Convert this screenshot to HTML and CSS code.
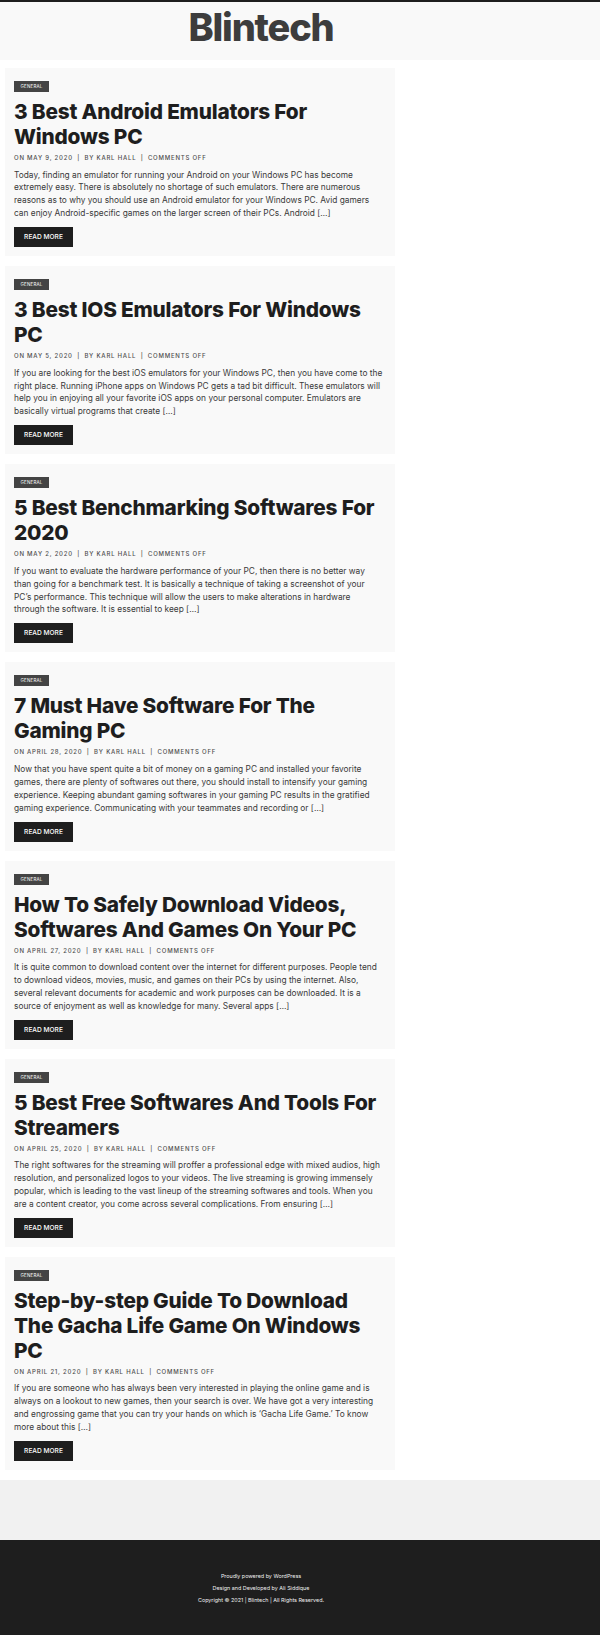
FILE: index.html
```html
<!DOCTYPE html>
<html lang="en">
<head>
<meta charset="utf-8">
<title>Blintech</title>
<link rel="stylesheet" href="styles.css">
</head>
<body>
<header class="site-header">
  <div class="header-inner"><h1 class="site-title">Blintech</h1></div>
</header>
<main class="posts">
  <article class="card">
    <span class="badge">GENERAL</span>
    <h2 class="title">3 Best Android Emulators For Windows PC</h2>
    <p class="meta">ON MAY 9, 2020 <span class="sep">|</span> BY KARL HALL <span class="sep">|</span> COMMENTS OFF</p>
    <p class="excerpt">Today, finding an emulator for running your Android on your Windows PC has become extremely easy. There is absolutely no shortage of such emulators. There are numerous reasons as to why you should use an Android emulator for your Windows PC. Avid gamers<br>can enjoy Android-specific games on the larger screen of their PCs. Android […]</p>
    <a class="btn" href="#">READ MORE</a>
  </article>
  <article class="card">
    <span class="badge">GENERAL</span>
    <h2 class="title">3 Best IOS Emulators For Windows PC</h2>
    <p class="meta">ON MAY 5, 2020 <span class="sep">|</span> BY KARL HALL <span class="sep">|</span> COMMENTS OFF</p>
    <p class="excerpt">If you are looking for the best iOS emulators for your Windows PC, then you have come to the right place. Running iPhone apps on Windows PC gets a tad bit difficult. These emulators will help you in enjoying all your favorite iOS apps on your personal computer. Emulators are basically virtual programs that create […]</p>
    <a class="btn" href="#">READ MORE</a>
  </article>
  <article class="card">
    <span class="badge">GENERAL</span>
    <h2 class="title">5 Best Benchmarking Softwares For 2020</h2>
    <p class="meta">ON MAY 2, 2020 <span class="sep">|</span> BY KARL HALL <span class="sep">|</span> COMMENTS OFF</p>
    <p class="excerpt">If you want to evaluate the hardware performance of your PC, then there is no better way<br>than going for a benchmark test. It is basically a technique of taking a screenshot of your<br>PC’s performance. This technique will allow the users to make alterations in hardware<br>through the software. It is essential to keep […]</p>
    <a class="btn" href="#">READ MORE</a>
  </article>
  <article class="card">
    <span class="badge">GENERAL</span>
    <h2 class="title">7 Must Have Software For The Gaming PC</h2>
    <p class="meta">ON APRIL 28, 2020 <span class="sep">|</span> BY KARL HALL <span class="sep">|</span> COMMENTS OFF</p>
    <p class="excerpt">Now that you have spent quite a bit of money on a gaming PC and installed your favorite games, there are plenty of softwares out there, you should install to intensify your gaming experience. Keeping abundant gaming softwares in your gaming PC results in the gratified gaming experience. Communicating with your teammates and recording or […]</p>
    <a class="btn" href="#">READ MORE</a>
  </article>
  <article class="card">
    <span class="badge">GENERAL</span>
    <h2 class="title">How To Safely Download Videos, Softwares And Games On Your PC</h2>
    <p class="meta">ON APRIL 27, 2020 <span class="sep">|</span> BY KARL HALL <span class="sep">|</span> COMMENTS OFF</p>
    <p class="excerpt">It is quite common to download content over the internet for different purposes. People tend to download videos, movies, music, and games on their PCs by using the internet. Also, several relevant documents for academic and work purposes can be downloaded. It is a source of enjoyment as well as knowledge for many. Several apps […]</p>
    <a class="btn" href="#">READ MORE</a>
  </article>
  <article class="card">
    <span class="badge">GENERAL</span>
    <h2 class="title">5 Best Free Softwares And Tools For Streamers</h2>
    <p class="meta">ON APRIL 25, 2020 <span class="sep">|</span> BY KARL HALL <span class="sep">|</span> COMMENTS OFF</p>
    <p class="excerpt">The right softwares for the streaming will proffer a professional edge with mixed audios, high resolution, and personalized logos to your videos. The live streaming is growing immensely popular, which is leading to the vast lineup of the streaming softwares and tools. When you are a content creator, you come across several complications. From ensuring […]</p>
    <a class="btn" href="#">READ MORE</a>
  </article>
  <article class="card">
    <span class="badge">GENERAL</span>
    <h2 class="title">Step-by-step Guide To Download The Gacha Life Game On Windows PC</h2>
    <p class="meta">ON APRIL 21, 2020 <span class="sep">|</span> BY KARL HALL <span class="sep">|</span> COMMENTS OFF</p>
    <p class="excerpt">If you are someone who has always been very interested in playing the online game and is always on a lookout to new games, then your search is over. We have got a very interesting and engrossing game that you can try your hands on which is ‘Gacha Life Game.’ To know more about this […]</p>
    <a class="btn" href="#">READ MORE</a>
  </article>
</main>
<div class="widget-area"></div>
<footer class="site-footer">
  <div class="footer-inner">
    <p>Proudly powered by WordPress</p>
    <p>Design and Developed by Ali Siddique</p>
    <p>Copyright © 2021 | Blintech | All Rights Reserved.</p>
  </div>
</footer>
</body>
</html>
```
FILE: styles.css
```css
* { box-sizing: border-box; }
html, body { margin: 0; padding: 0; }
body {
  background: #ffffff;
  font-family: Inter, "Open Sans", "Liberation Sans", sans-serif;
  color: #3a3a3a;
}
.site-header {
  border-top: 2px solid #1e1e1e;
  background: #f9f9f9;
  padding-bottom: 8px;
}
.header-inner {
  width: 522px;
  text-align: center;
}
.site-title {
  margin: 0;
  font-size: 38px;
  line-height: 50px;
  font-weight: 800;
  color: #3d3d3d;
  letter-spacing: -1.2px;
}
.posts {
  width: 390px;
  margin: 8px 0 0 5px;
  display: flex;
  flex-direction: column;
  gap: 10px;
}
.card {
  background: #f9f9f9;
  padding: 13px 9px 9px;
  display: flex;
  flex-direction: column;
  align-items: flex-start;
}
.badge {
  display: inline-block;
  background: #444444;
  color: #ffffff;
  font-size: 4.5px;
  line-height: 11px;
  width: 35px;
  text-align: center;
  letter-spacing: 0.2px;
}
.title {
  margin: 7px 0 0;
  font-size: 20.8px;
  line-height: 25px;
  font-weight: 800;
  color: #1e1e1e;
  letter-spacing: -0.2px;
}
.meta {
  margin: 4px 0 0;
  font-size: 6px;
  line-height: 10px;
  letter-spacing: 0.78px;
  color: #4f4f4f;
  font-weight: 500;
}
.sep { margin: 0 2px; }
.excerpt {
  margin: 5.5px 0 0;
  font-size: 8.35px;
  line-height: 12.9px;
  color: #3a3a3a;
}
.btn {
  display: inline-block;
  margin-top: 7px;
  background: #1e1e1e;
  color: #fff;
  text-decoration: none;
  font-size: 6.6px;
  line-height: 20px;
  width: 59px;
  text-align: center;
  font-weight: 500;
}
.widget-area {
  background: #f1f1f1;
  height: 60px;
  margin-top: 10px;
}
.site-footer {
  background: #1e1e1e;
  height: 96px;
  padding-top: 30px;
}
.footer-inner {
  width: 522px;
  text-align: center;
  color: #f0f0f0;
}
.footer-inner p {
  margin: 0;
  font-size: 5.4px;
  line-height: 12px;
}
```
